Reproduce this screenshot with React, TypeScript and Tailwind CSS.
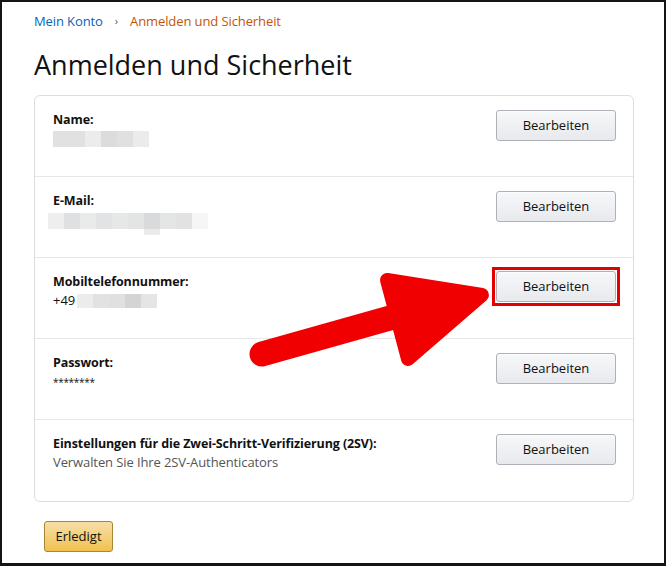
const blocks = (cells: string[], h: string) => (
  <div className="flex">
    {cells.map((c, i) => (
      <div key={i} className={`w-4 ${h}`} style={{ backgroundColor: c }} />
    ))}
  </div>
);

function EditButton({ highlight = false }: { highlight?: boolean }) {
  const btn = (
    <button className="w-[120px] h-[31px] rounded-[3px] border border-[#adb1b8] bg-gradient-to-b from-[#f7f8fa] to-[#e7e9ec] text-[13px] text-[#111] shadow-[inset_0_1px_0_rgba(255,255,255,0.6)]">
      Bearbeiten
    </button>
  );
  if (!highlight) return btn;
  return <div className="border-[3px] border-[#e50000] p-px -m-1 -mt-[5px]">{btn}</div>;
}

function Row({
  label,
  children,
  highlight,
  last,
}: {
  label: string;
  children: React.ReactNode;
  highlight?: boolean;
  last?: boolean;
}) {
  return (
    <div className={`flex h-[81px] items-start justify-between pl-[18px] pr-[17px] pt-[14px] ${last ? '' : 'border-b border-[#e7e7e7]'}`}>
      <div>
        <div className="text-[12.5px] font-bold leading-[19px] text-[#111] tracking-[-0.1px]">{label}</div>
        <div className="text-[13px] leading-[19px] text-[#111]">{children}</div>
      </div>
      <EditButton highlight={highlight} />
    </div>
  );
}

export default function App() {
  return (
    <div
      className="relative w-[666px] h-[566px] overflow-hidden border-2 border-b-[3px] border-[#141414] bg-white"
      style={{ fontFamily: '"Open Sans", "Noto Sans", Arial, sans-serif' }}
    >
      <div className="pl-[32px] pr-[30px] pt-[10px]">
        <div className="flex items-center text-[13px] leading-[18px] tracking-[-0.1px]">
          <span className="text-[#0066c0]">Mein Konto</span>
          <span className="mx-[12px] text-[11px] text-[#555]">›</span>
          <span className="text-[#c45500]">Anmelden und Sicherheit</span>
        </div>
        <h1 className="mt-[17px] text-[27px] leading-[36px] text-[#111]">Anmelden und Sicherheit</h1>
        <div className="mt-[12px] rounded-[6px] border border-[#dddddd]">
          <Row label="Name:">
            <div className="pt-[2px]">
              {blocks(['#e1e1e1', '#e1e1e1', '#ececec', '#dcdcdc', '#e0e0e0', '#ebebeb'], 'h-[16px]')}
            </div>
          </Row>
          <Row label="E-Mail:">
            <div className="-ml-[5px] pt-[3px]">
              {blocks(['#eeeeee', '#dfe0e1', '#e9eaea', '#e2e3e4', '#e6e7e7', '#e3e4e4', '#d9dadb', '#e4e5e5', '#e2e2e3', '#f6f6f6'], 'h-[16px]')}
              <div className="ml-[96px] w-4 h-[6px] bg-[#ebebeb]" />
            </div>
          </Row>
          <Row label="Mobiltelefonnummer:" highlight>
            <div className="flex items-center">
              <span>+49</span>
              <div className="ml-[2px]">
                {blocks(['#ececec', '#e2e2e2', '#e0e0e0', '#d4d4d4', '#e5e5e5'], 'h-[14px]')}
              </div>
            </div>
          </Row>
          <Row label="Passwort:">
            <span className="text-[10px] tracking-[-0.3px]">********</span>
          </Row>
          <Row label="Einstellungen für die Zwei-Schritt-Verifizierung (2SV):" last>
            <span className="text-[#555] tracking-[-0.1px]">Verwalten Sie Ihre 2SV-Authenticators</span>
          </Row>
        </div>
        <button className="mt-[19px] ml-[10px] h-[31px] w-[69px] rounded-[3px] border border-[#a88734] bg-gradient-to-b from-[#f7dfa5] to-[#f0c14b] text-[13px] text-[#111]">
          Erledigt
        </button>
      </div>

      <svg className="pointer-events-none absolute left-0 top-0" width="666" height="566" viewBox="-2 -2 666 566">
        <line x1="258" y1="350" x2="425" y2="303" stroke="#f00000" strokeWidth="25" strokeLinecap="round" />
        <polygon
          points="383,276 478,291 404,355"
          fill="#f00000"
          stroke="#f00000"
          strokeWidth="14"
          strokeLinejoin="round"
        />
      </svg>
    </div>
  );
}
